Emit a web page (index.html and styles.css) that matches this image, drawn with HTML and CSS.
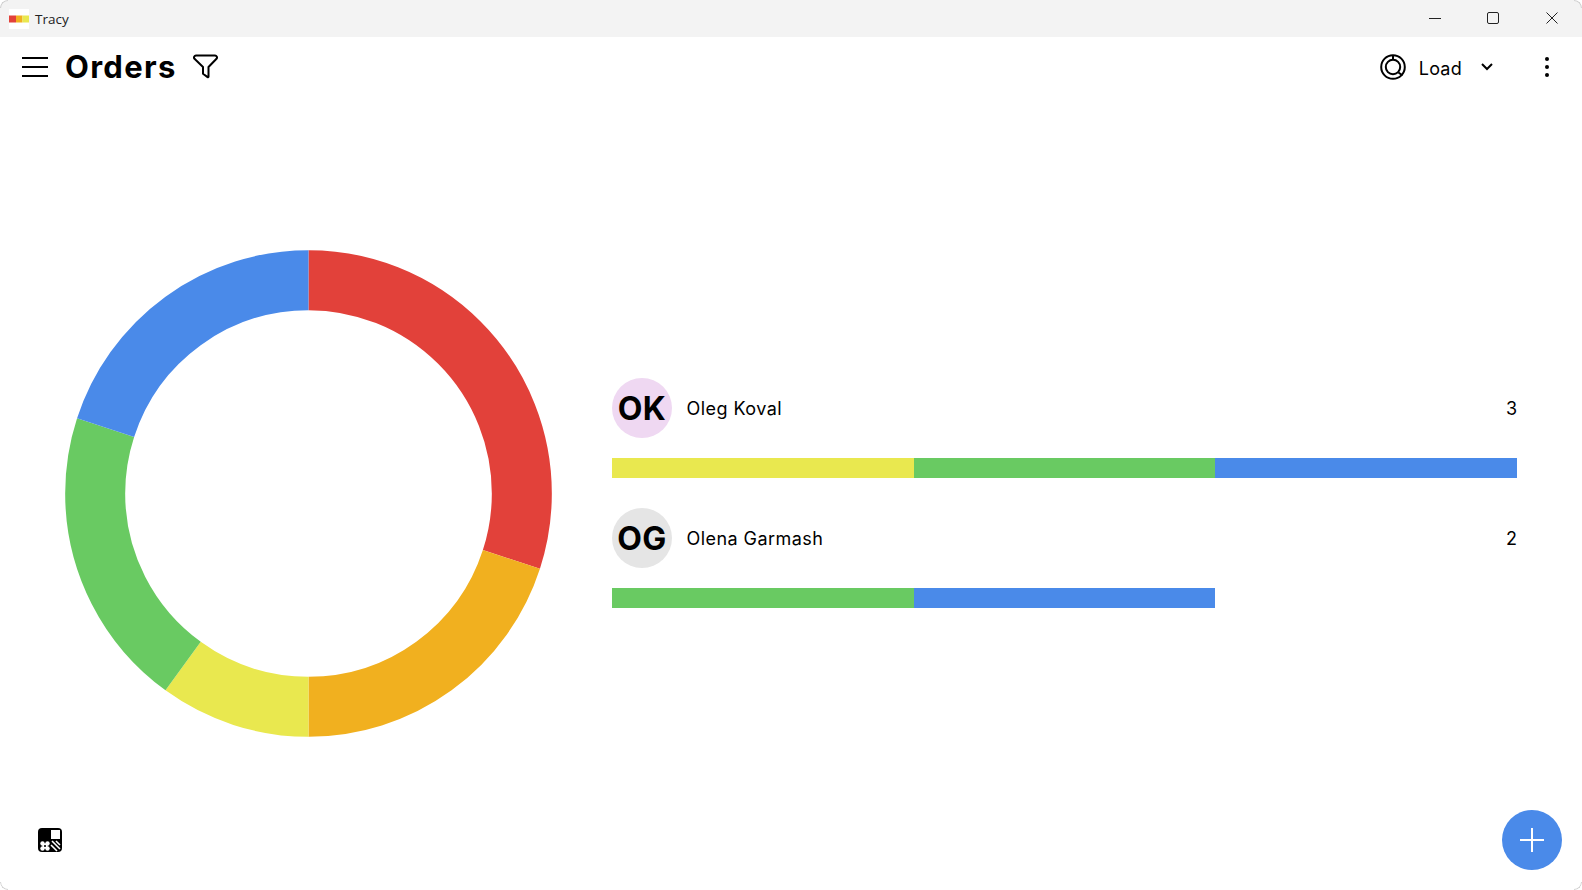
FILE: index.html
```html
<!DOCTYPE html>
<html lang="en">
<head>
<meta charset="utf-8">
<title>Tracy</title>
<link rel="stylesheet" href="styles.css">
</head>
<body>
<div class="window">
  <div class="titlebar">
    <div class="app">
      <svg class="app-icon" width="20" height="20" viewBox="0 0 20 20"><rect width="20" height="20" fill="#fff"/><rect y="6.5" width="7" height="7" fill="#e2413a"/><rect x="7" y="6.5" width="6.5" height="7" fill="#f1b01f"/><rect x="13.5" y="6.5" width="6.5" height="7" fill="#e9e84f"/></svg>
      <span class="app-name">Tracy</span>
    </div>
    <div class="win-controls">
      <span class="win-btn"><svg width="12" height="12" viewBox="0 0 12 12"><path d="M0 6.5h12" stroke="#222" fill="none"/></svg></span>
      <span class="win-btn"><svg width="12" height="12" viewBox="0 0 12 12"><rect x=".5" y=".5" width="11" height="11" rx="1.5" stroke="#222" fill="none"/></svg></span>
      <span class="win-btn"><svg width="12" height="12" viewBox="0 0 12 12"><path d="M.5.5l11 11M11.5.5l-11 11" stroke="#222" fill="none"/></svg></span>
    </div>
  </div>
  <header class="toolbar">
    <svg class="menu-icon" width="26" height="20" viewBox="0 0 26 20"><path d="M0 1h26M0 10h26M0 19h26" stroke="#000" stroke-width="2" fill="none"/></svg>
    <h1 class="title">Orders</h1>
    <svg class="filter-icon" width="25" height="25" viewBox="0 0 25 25"><path d="M3 1.500h19a2 2 0 0 1 1.500 3.300L15.500 13v9.600a.6.6 0 0 1-.9.5l-4.600-3.400V13L1.500 4.800A2 2 0 0 1 3 1.500z" stroke="#000" stroke-width="2" stroke-linejoin="round" fill="none"/></svg>
    <div class="spacer"></div>
    <div class="load">
      <svg width="26" height="26" viewBox="0 0 26 26"><circle cx="13" cy="13" r="11.800" stroke="#000" stroke-width="2" fill="none"/><circle cx="13" cy="13" r="7.200" stroke="#000" stroke-width="2" fill="none"/><path d="M13 1.500v4.500M18.500 18.500l4 3" stroke="#000" stroke-width="2" fill="none"/></svg>
      <span class="load-label">Load</span>
      <svg class="chev" width="12" height="8" viewBox="0 0 12 8"><path d="M1 1l5 5 5-5" stroke="#000" stroke-width="2" fill="none"/></svg>
    </div>
    <svg class="more" width="4" height="20" viewBox="0 0 4 20"><circle cx="2" cy="2" r="2"/><circle cx="2" cy="10" r="2"/><circle cx="2" cy="18" r="2"/></svg>
  </header>
  <main class="content">
    <div class="chart">
      <svg width="487" height="487" viewBox="0 0 487 487">
        <g fill="none" stroke-width="60" transform="rotate(-90 243.5 243.5)">
          <circle cx="243.5" cy="243.5" r="213.33" stroke="#e2413a" pathLength="100" stroke-dasharray="30 70" stroke-dashoffset="0"/>
          <circle cx="243.5" cy="243.5" r="213.33" stroke="#f1b01f" pathLength="100" stroke-dasharray="20 80" stroke-dashoffset="-30"/>
          <circle cx="243.5" cy="243.5" r="213.33" stroke="#e9e84f" pathLength="100" stroke-dasharray="10 90" stroke-dashoffset="-50"/>
          <circle cx="243.5" cy="243.5" r="213.33" stroke="#69ca62" pathLength="100" stroke-dasharray="20 80" stroke-dashoffset="-60"/>
          <circle cx="243.5" cy="243.5" r="213.33" stroke="#4a8ae9" pathLength="100" stroke-dasharray="20 80" stroke-dashoffset="-80"/>
        </g>
      </svg>
    </div>
    <div class="list">
      <div class="person">
        <div class="person-row">
          <div class="avatar avatar-pink">OK</div>
          <span class="name">Oleg Koval</span>
          <span class="count">3</span>
        </div>
        <div class="bar">
          <span class="seg yellow"></span><span class="seg green"></span><span class="seg blue"></span>
        </div>
      </div>
      <div class="person">
        <div class="person-row">
          <div class="avatar avatar-gray">OG</div>
          <span class="name">Olena Garmash</span>
          <span class="count">2</span>
        </div>
        <div class="bar">
          <span class="seg green"></span><span class="seg blue"></span>
        </div>
      </div>
    </div>
  </main>
  <svg class="pattern" width="24" height="24" viewBox="0 0 24 24">
    <defs><clipPath id="rr"><rect width="24" height="24" rx="4"/></clipPath></defs>
    <g clip-path="url(#rr)">
      <rect width="24" height="24" fill="#000"/>
      <rect x="13" y="2" width="9" height="9" fill="#fff"/>
      <path d="M4.500 15.500l5 5M9.500 15.500l-5 5" stroke="#fff" stroke-width="3" fill="none"/>
      <circle cx="4.500" cy="15.500" r="2.200" fill="#fff"/><circle cx="9.500" cy="15.500" r="2.200" fill="#fff"/><circle cx="4.500" cy="20.500" r="2.200" fill="#fff"/><circle cx="9.500" cy="20.500" r="2.200" fill="#fff"/><circle cx="7" cy="18" r="1.100" fill="#000"/>
      <path d="M14 13l8 8M13 17l6 6M18 13l4 4" stroke="#fff" stroke-width="1.600" fill="none"/>
    </g>
  </svg>
  <button class="fab" type="button" aria-label="Add"><svg width="24" height="24" viewBox="0 0 24 24"><path d="M12 0v24M0 12h24" stroke="#fff" stroke-width="2" fill="none"/></svg></button>
  <span class="corner corner-tl"></span>
  <span class="corner corner-tr"></span>
  <span class="corner corner-bl"></span>
  <span class="corner corner-br"></span>
</div>
</body>
</html>
```
FILE: styles.css
```css
* { box-sizing: border-box; }
html, body { margin: 0; height: 100%; background: #fff; overflow: hidden; }
.window {
  position: relative;
  width: 1582px;
  height: 890px;
  display: flex;
  flex-direction: column;
  background: #fff;
  border-radius: 8px;
  overflow: hidden;
  color: #000;
  font-family: "Inter", "Liberation Sans", sans-serif;
}
.titlebar {
  height: 37px;
  flex: none;
  display: flex;
  align-items: center;
  justify-content: space-between;
  background: #f3f3f3;
}
.app { display: flex; align-items: center; padding-left: 9px; gap: 6px; }
.app-name { font-family: "Open Sans", sans-serif; font-size: 13.5px; color: #222; }
.win-controls { display: flex; align-items: center; padding: 0 1px 2px 0; }
.win-btn { width: 58.5px; display: flex; justify-content: center; align-items: center; }
.toolbar {
  height: 60px;
  flex: none;
  display: flex;
  align-items: center;
  padding: 0 33px 0 22px;
}
.title { margin: 0 0 2px 17px; font-size: 31px; font-weight: 700; line-height: 1; letter-spacing: 1.3px; }
.filter-icon { margin: 0 0 2px 16px; }
.spacer { flex: 1; }
.load { display: flex; align-items: center; margin-right: 52px; }
.load-label { margin-left: 13px; padding-top: 2px; font-size: 18px; letter-spacing: .25px; }
.chev { margin-left: 19px; }
.content {
  flex: 1;
  display: flex;
  align-items: center;
  padding: 0 65px;
  gap: 60px;
}
.chart { flex: none; width: 487px; height: 487px; }
.chart svg { display: block; }
.list { flex: 1; display: flex; flex-direction: column; gap: 30px; margin-bottom: 2px; }
.person { display: flex; flex-direction: column; gap: 20px; }
.person-row { display: flex; align-items: center; height: 60px; }
.avatar {
  width: 60px;
  height: 60px;
  flex: none;
  border-radius: 50%;
  display: flex;
  align-items: center;
  justify-content: center;
  padding-top: 1px;
  font-size: 32px;
  font-weight: 700;
  letter-spacing: .5px;
}
.avatar-pink { background: #efd8f2; }
.avatar-gray { background: #e5e5e5; }
.name { margin-left: 14.5px; padding-top: 2px; font-size: 18px; letter-spacing: .45px; }
.count { margin-left: auto; padding-top: 2px; font-size: 18px; }
.bar { display: flex; height: 20px; }
.seg { width: 33.333%; }
.yellow { background: #e9e84f; }
.green { background: #69ca62; }
.blue { background: #4a8ae9; }
.pattern { position: absolute; left: 38px; bottom: 38px; }
.fab {
  position: absolute;
  right: 20px;
  bottom: 20px;
  width: 60px;
  height: 60px;
  border: 0;
  padding: 0;
  border-radius: 50%;
  background: #4a8ae9;
  display: flex;
  align-items: center;
  justify-content: center;
}
.corner { position: absolute; width: 8px; height: 8px; border: 0 solid #cfcfcf; }
.corner-tl { top: 0; left: 0; border-width: 1px 0 0 1px; border-top-left-radius: 8px; }
.corner-tr { top: 0; right: 0; border-width: 1px 1px 0 0; border-top-right-radius: 8px; }
.corner-bl { bottom: 0; left: 0; border-width: 0 0 1px 1px; border-bottom-left-radius: 8px; }
.corner-br { bottom: 0; right: 0; border-width: 0 1px 1px 0; border-bottom-right-radius: 8px; }
```
